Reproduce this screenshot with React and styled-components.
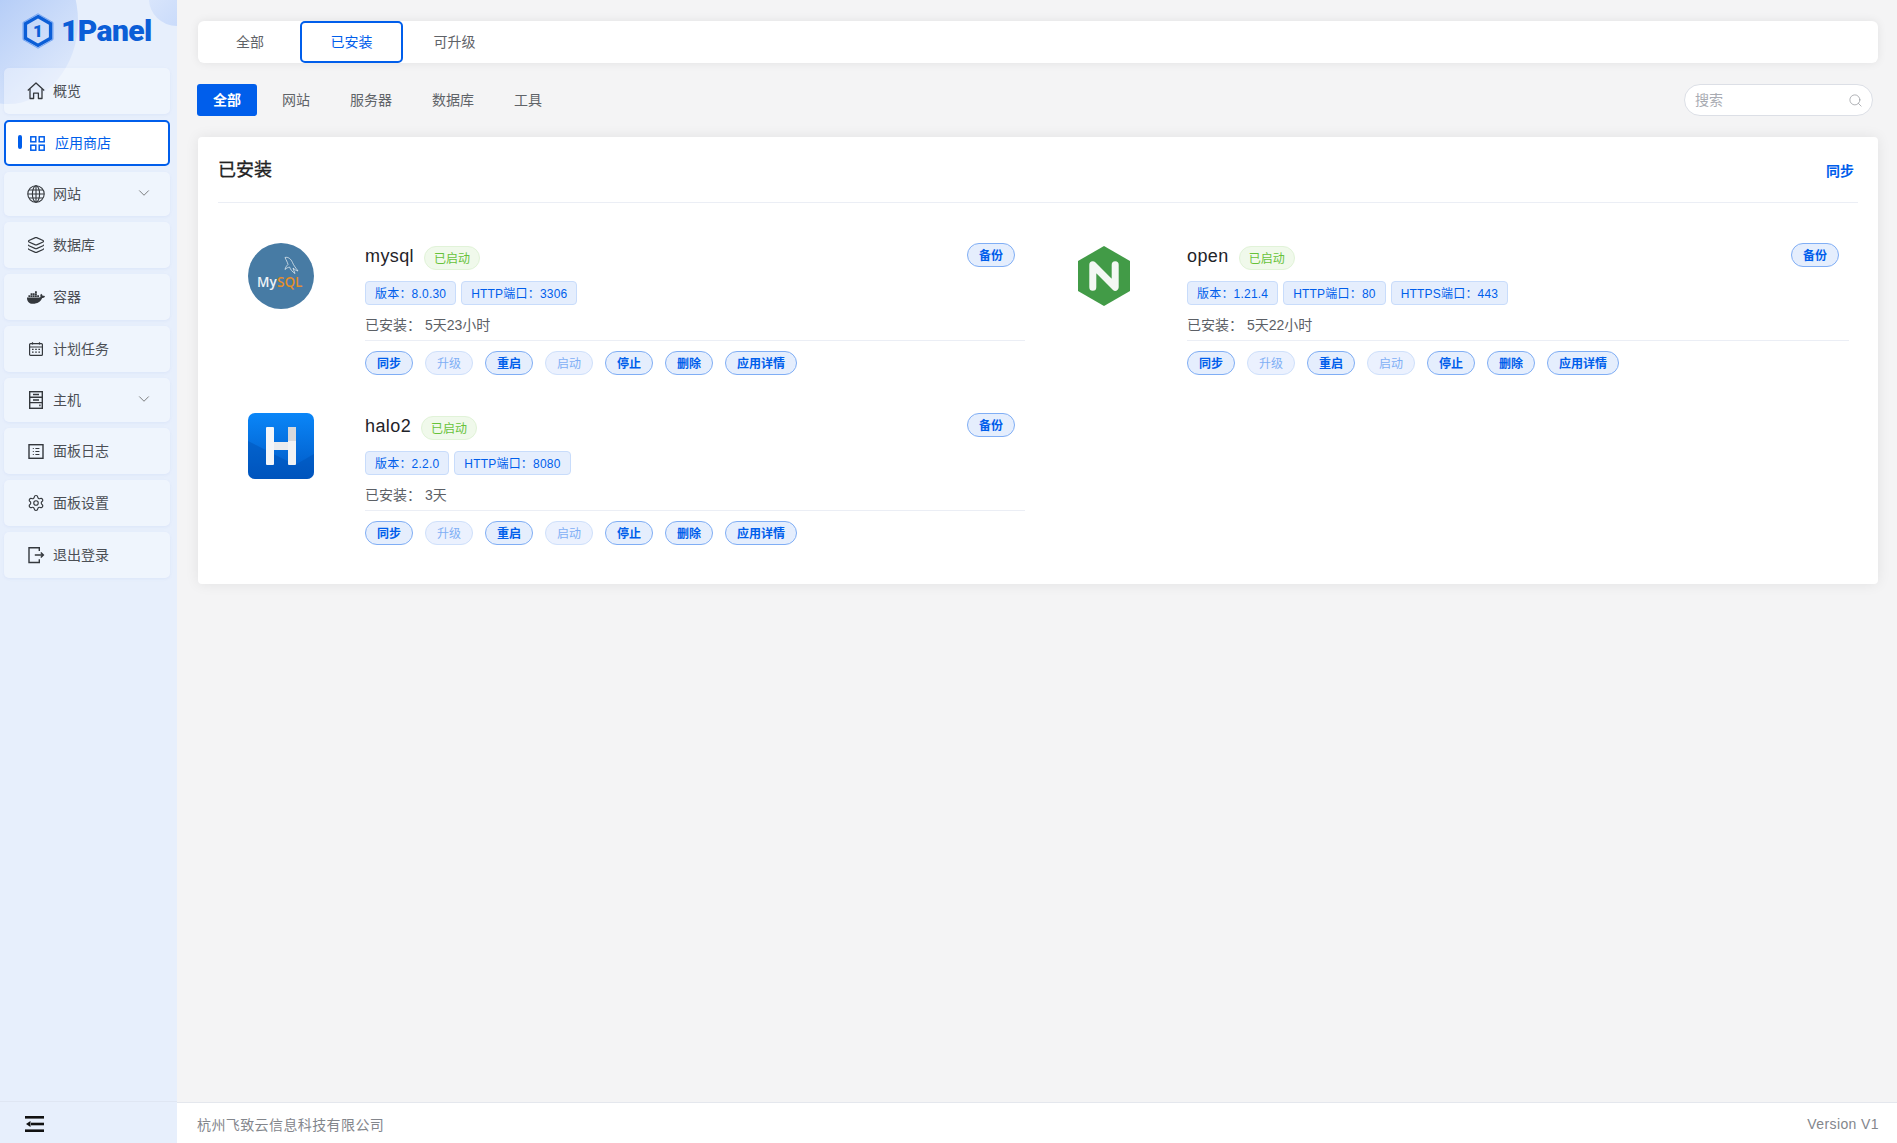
import styled, { createGlobalStyle } from 'styled-components';
import { useState } from 'react';
import { Layers, Settings, ChevronDown, Search } from 'lucide-react';
import { FaDocker } from 'react-icons/fa';

const FONT = `"Liberation Sans", "Noto Sans CJK SC", sans-serif`;
const BLUE = '#005eeb';
const INK = '#34383d';

const GlobalStyle = createGlobalStyle`
    html, body { margin: 0; padding: 0; height: 100%; }
    body { font-family: ${FONT}; background: #f4f4f5; overflow: hidden; }
    * { box-sizing: border-box; }
`;

const HomeIcon = () => (
    <svg width="18" height="18" viewBox="0 0 18 18" fill="none" stroke={INK} strokeWidth="1.300" strokeLinejoin="round">
        <path d="M.8 8.600 9 1l8.200 7.600" />
        <path d="M3 7v9.500h3.600v-5.300h4.800v5.300H15V7" />
    </svg>
);

const GridIcon = () => (
    <svg width="15" height="15" viewBox="0 0 15 15" fill="none" stroke={BLUE} strokeWidth="1.500">
        <rect x=".8" y=".8" width="5" height="5" />
        <rect x="9.200" y=".8" width="5" height="5" />
        <rect x=".8" y="9.200" width="5" height="5" />
        <rect x="9.200" y="9.200" width="5" height="5" />
    </svg>
);

const GlobeIcon = () => (
    <svg width="18" height="18" viewBox="0 0 18 18" fill="none" stroke={INK} strokeWidth="1.100">
        <circle cx="9" cy="9" r="8.200" />
        <ellipse cx="9" cy="9" rx="3.600" ry="8.200" />
        <path d="M9 .8v16.400M.8 9h16.400M2 5h14M2 13h14" />
    </svg>
);

const CalendarIcon = () => (
    <svg width="18" height="18" viewBox="0 0 18 18" fill="none" stroke={INK} strokeWidth="1.200">
        <rect x="2.600" y="3.600" width="12.800" height="11.800" rx="1" />
        <path d="M2.600 7h12.800M5.500 2.200v2.400M12.500 2.200v2.400" />
        <path d="M5 9.300h1.600M8.200 9.300h1.600M11.400 9.300H13M5 12.200h1.600M8.200 12.200h1.600M11.400 12.200H13" />
    </svg>
);

const ServerIcon = () => (
    <svg width="18" height="18" viewBox="0 0 18 18" fill="none" stroke={INK} strokeWidth="1.400">
        <rect x="2.700" y=".7" width="12.600" height="16.600" />
        <path d="M2.700 6.200h12.600M2.700 11.600h12.600M6 3.500h6M6 9h6" />
        <path d="M12.200 14.400h1.400" strokeWidth="1.800" />
    </svg>
);

const LogIcon = () => (
    <svg width="18" height="18" viewBox="0 0 18 18" fill="none" stroke={INK} strokeWidth="1.400">
        <rect x="2" y="2.700" width="14" height="13.600" />
        <path d="M5.800 6.500h1M8.400 6.500h4M5.800 9.500h1M8.400 9.500h4M5.800 12.500h1M8.400 12.500h4" strokeWidth="1.200" />
    </svg>
);

const LogoutIcon = () => (
    <svg width="18" height="18" viewBox="0 0 18 18" fill="none" stroke={INK} strokeWidth="1.400">
        <path d="M12.300 5V1.700H2v14.800h10.300v-3.300" />
        <path d="M7.800 9h8.600M13.800 6.400 16.400 9l-2.600 2.600" />
    </svg>
);

const BrandIcon = () => (
    <svg width="32" height="36" viewBox="0 0 32 36">
        <path d="M16 .8 31 9.400v17.200L16 35.200 1 26.600V9.400z" fill="none" stroke="#4d8df0" strokeWidth=".7" />
        <path d="M16 3.600 28.600 10.800v14.400L16 32.400 3.400 25.200V10.800z" fill="none" stroke="#0b5ed7" strokeWidth="3.400" />
        <text x="16" y="24" textAnchor="middle" fontFamily="Roboto, sans-serif" fontWeight="900" fontSize="17" fill="#0b5ed7">1</text>
    </svg>
);

const MysqlLogo = () => (
    <svg width="66" height="66" viewBox="0 0 66 66">
        <circle cx="33" cy="33" r="33" fill="#477ba4" />
        <text x="9" y="43.500" fontFamily="'Open Sans', sans-serif" fontWeight="600" fontSize="13.500" fill="#eef3f7">My</text>
        <text x="29" y="43.500" fontFamily="'Open Sans', sans-serif" fontWeight="600" fontSize="13.500" fill="#e48e2a">SQL</text>
        <path d="M37 14.500c3-1 6 1.500 7.500 5 1 2.500 2.500 4.500 5.500 8.500-2-.5-3.500-1.500-5-3 .5 2 1.500 4 2 5.500-2.500-1.500-4.500-4-5.500-6.500-1.500.5-3 1-4.500 2.500.5-2.500 2-4 3-5-.5-2.500-2-4.500-3-7z" fill="none" stroke="#dfe8ef" strokeWidth=".8" />
    </svg>
);

const NginxLogo = () => (
    <svg width="54" height="60" viewBox="-2 0 54 60">
        <path d="M26 0 52 15v30L26 60 0 45V15z" fill="#429b47" />
        <path d="M14.800 41.200V18.800L37.200 41.200V18.800" fill="none" stroke="#f3f8f3" strokeWidth="7" strokeLinecap="round" strokeLinejoin="round" />
    </svg>
);

const HaloLogo = () => (
    <svg width="66" height="66" viewBox="0 0 66 66">
        <defs>
            <linearGradient id="haloBg" x1="0" y1="0" x2="0" y2="1">
                <stop offset="0" stopColor="#0a86f8" />
                <stop offset="1" stopColor="#0058c4" />
            </linearGradient>
        </defs>
        <rect width="66" height="66" rx="7" fill="url(#haloBg)" />
        <path d="M47 52 66 41v18a7 7 0 0 1-7 7H7a7 7 0 0 1-7-7V28z" fill="#004fb4" opacity=".45" />
        <rect x="18" y="14" width="8" height="38" rx="1" fill="#f4f6f9" />
        <rect x="40" y="14" width="8" height="38" rx="1" fill="#f1f2f4" />
        <rect x="40" y="14" width="8" height="14" fill="#d8d9dc" />
        <rect x="26" y="29" width="14" height="8" fill="#e9ebee" />
    </svg>
);

const iconStroke = { size: 22, strokeWidth: 1.500, color: INK };

const menu = [
    { label: '概览', icon: <HomeIcon />, h: 46 },
    { label: '应用商店', icon: <GridIcon />, h: 46, active: true },
    { label: '网站', icon: <GlobeIcon />, h: 44, arrow: true },
    { label: '数据库', icon: <Layers {...iconStroke} />, h: 46 },
    { label: '容器', icon: <FaDocker size={21} color={INK} />, h: 46 },
    { label: '计划任务', icon: <CalendarIcon />, h: 46 },
    { label: '主机', icon: <ServerIcon />, h: 44, arrow: true },
    { label: '面板日志', icon: <LogIcon />, h: 46 },
    { label: '面板设置', icon: <Settings {...iconStroke} />, h: 46 },
    { label: '退出登录', icon: <LogoutIcon />, h: 46 },
];

const apps = [
    {
        name: 'mysql',
        logo: <MysqlLogo />,
        tags: ['版本：8.0.30', 'HTTP端口：3306'],
        installed: '5天23小时',
    },
    {
        name: 'open',
        logo: <NginxLogo />,
        tags: ['版本：1.21.4', 'HTTP端口：80', 'HTTPS端口：443'],
        installed: '5天22小时',
    },
    {
        name: 'halo2',
        logo: <HaloLogo />,
        tags: ['版本：2.2.0', 'HTTP端口：8080'],
        installed: '3天',
    },
];

const actions = [
    { label: '同步' },
    { label: '升级', disabled: true },
    { label: '重启' },
    { label: '启动', disabled: true },
    { label: '停止' },
    { label: '删除' },
    { label: '应用详情' },
];

export default function App() {
    const [tab, setTab] = useState('已安装');
    const [filter, setFilter] = useState('全部');

    return (
        <Layout>
            <GlobalStyle />
            <Sidebar>
                <BlobLeft />
                <BlobRight />
                <Brand>
                    <BrandIcon />
                    <BrandName>1Panel</BrandName>
                </Brand>
                <Menu>
                    {menu.map((item) => (
                        <MenuItem key={item.label} $active={item.active} $h={item.h}>
                            {item.active && <ActiveBar />}
                            <MenuIcon $active={item.active}>{item.icon}</MenuIcon>
                            <span>{item.label}</span>
                            {item.arrow && <MenuArrow><ChevronDown size={18} strokeWidth={1} color="#555" /></MenuArrow>}
                        </MenuItem>
                    ))}
                </Menu>
                <Collapse>
                    <svg width="20" height="16" viewBox="0 0 20 16" fill="#111">
                        <rect x="0" y="0" width="19" height="2.600" />
                        <rect x="0" y="13.400" width="19" height="2.600" />
                        <rect x="6" y="6.700" width="13" height="2.600" />
                        <path d="M1 8l4.500-3v6z" />
                    </svg>
                </Collapse>
            </Sidebar>

            <Main>
                <Content>
                    <TabBar>
                        {['全部', '已安装', '可升级'].map((t) => (
                            <Tab key={t} $active={t === tab} onClick={() => setTab(t)}>{t}</Tab>
                        ))}
                    </TabBar>

                    <FilterRow>
                        {['全部', '网站', '服务器', '数据库', '工具'].map((f) => (
                            <Filter key={f} $active={f === filter} onClick={() => setFilter(f)}>{f}</Filter>
                        ))}
                        <SearchBox>
                            <SearchInput placeholder="搜索" />
                            <Search size={15} strokeWidth={1.100} color="#8f9198" />
                        </SearchBox>
                    </FilterRow>

                    <Card>
                        <CardHeader>
                            <CardTitle>已安装</CardTitle>
                            <SyncLink>同步</SyncLink>
                        </CardHeader>
                        <AppGrid>
                            {apps.map((app) => (
                                <AppRow key={app.name}>
                                    <LogoCell>{app.logo}</LogoCell>
                                    <AppInfo>
                                        <TitleRow>
                                            <AppName>{app.name}</AppName>
                                            <Status>已启动</Status>
                                            <ActionButton $right>备份</ActionButton>
                                        </TitleRow>
                                        <TagRow>
                                            {app.tags.map((t) => <Tag key={t}>{t}</Tag>)}
                                        </TagRow>
                                        <Installed>
                                            <InstalledLabel>已安装：</InstalledLabel>
                                            {app.installed}
                                        </Installed>
                                        <Actions>
                                            {actions.map((a) => (
                                                <ActionButton key={a.label} $disabled={a.disabled}>{a.label}</ActionButton>
                                            ))}
                                        </Actions>
                                    </AppInfo>
                                </AppRow>
                            ))}
                        </AppGrid>
                    </Card>
                </Content>
                <Footer>
                    <span>杭州飞致云信息科技有限公司</span>
                    <span>Version V1</span>
                </Footer>
            </Main>
        </Layout>
    );
}

const Layout = styled.div`
    display: flex;
    height: 100vh;
`;

const Sidebar = styled.aside`
    position: relative;
    width: 177px;
    flex-shrink: 0;
    display: flex;
    flex-direction: column;
    background: #e7effc;
    overflow: hidden;
`;

const BlobLeft = styled.div`
    position: absolute;
    left: -62px;
    top: -62px;
    width: 140px;
    height: 166px;
    border-radius: 50%;
    background: linear-gradient(135deg, #a9c5f6 25%, #e3ecfc 95%);
`;

const BlobRight = styled.div`
    position: absolute;
    right: -28px;
    top: -28px;
    width: 56px;
    height: 54px;
    border-radius: 50%;
    background: linear-gradient(135deg, #e0eafc, #c2d6fa);
`;

const Brand = styled.div`
    position: relative;
    height: 68px;
    display: flex;
    align-items: flex-start;
    gap: 7px;
    padding: 13px 0 0 22px;
`;

const BrandName = styled.div`
    font-family: Roboto, sans-serif;
    font-weight: 900;
    font-size: 30px;
    line-height: 35px;
    letter-spacing: -0.6px;
    color: #0b5ed7;
`;

const Menu = styled.nav`
    position: relative;
    display: flex;
    flex-direction: column;
    gap: 6px;
    padding: 0 7px 0 4px;
    flex: 1;
`;

const MenuItem = styled.div`
    display: flex;
    align-items: center;
    height: ${(p) => p.$h}px;
    padding-left: ${(p) => (p.$active ? '12px' : '23px')};
    padding-bottom: 2px;
    border-radius: 5px;
    font-size: 14px;
    cursor: pointer;
    color: ${(p) => (p.$active ? BLUE : '#4b4f55')};
    background: ${(p) => (p.$active ? '#fff' : 'rgba(255, 255, 255, 0.36)')};
    border: ${(p) => (p.$active ? `2px solid ${BLUE}` : 'none')};
    box-shadow: ${(p) => (p.$active ? 'none' : '0 1px 3px rgba(120, 150, 220, 0.1)')};
`;

const ActiveBar = styled.i`
    width: 4px;
    height: 14px;
    border-radius: 2px;
    background: ${BLUE};
    margin-right: 8px;
`;

const MenuIcon = styled.span`
    display: flex;
    align-items: center;
    justify-content: center;
    width: ${(p) => (p.$active ? '15px' : '18px')};
    margin-top: 2px;
    margin-right: ${(p) => (p.$active ? '10px' : '8px')};
`;

const MenuArrow = styled.span`
    display: flex;
    margin-left: auto;
    margin-right: 17px;
    margin-top: -1px;
`;

const Collapse = styled.div`
    height: 42px;
    flex-shrink: 0;
    display: flex;
    align-items: center;
    padding: 2px 0 0 25px;
    border-top: 1px solid #dfe6f3;
`;

const Main = styled.main`
    flex: 1;
    min-width: 0;
    display: flex;
    flex-direction: column;
`;

const Content = styled.div`
    flex: 1;
    padding: 21px 19px 0 21px;
`;

const TabBar = styled.div`
    display: flex;
    height: 42px;
    background: #fff;
    border-radius: 6px;
    box-shadow: 0 0 10px rgba(0, 0, 0, 0.08);
`;

const Tab = styled.div`
    width: 103px;
    padding-bottom: 2px;
    display: flex;
    align-items: center;
    justify-content: center;
    font-size: 14px;
    cursor: pointer;
    color: ${(p) => (p.$active ? BLUE : '#5f6368')};
    border: ${(p) => (p.$active ? `2px solid ${BLUE}` : 'none')};
    border-radius: 5px;

    &:first-child {
        width: 102px;
        padding-left: 2px;
    }
`;

const FilterRow = styled.div`
    display: flex;
    align-items: center;
    gap: 10px;
    margin: 21px 5px 21px -1px;
    height: 32px;
`;

const Filter = styled.div`
    height: 32px;
    padding: 0 ${(p) => (p.$active ? '16px' : '15px')} 2px;
    display: flex;
    align-items: center;
    font-size: 14px;
    border-radius: 3px;
    cursor: pointer;
    font-weight: ${(p) => (p.$active ? 700 : 400)};
    color: ${(p) => (p.$active ? '#fff' : '#5f6368')};
    background: ${(p) => (p.$active ? BLUE : 'transparent')};
`;

const SearchBox = styled.label`
    margin-left: auto;
    width: 189px;
    height: 32px;
    display: flex;
    align-items: center;
    padding: 0 9px 0 10px;
    background: #fff;
    border: 1px solid #dcdfe6;
    border-radius: 16px;
`;

const SearchInput = styled.input`
    flex: 1;
    min-width: 0;
    border: none;
    outline: none;
    padding: 0;
    background: transparent;
    font-family: ${FONT};
    font-size: 14px;

    &::placeholder {
        color: #a8abb2;
    }
`;

const Card = styled.section`
    background: #fff;
    border-radius: 4px;
    padding: 0 20px 19px;
    box-shadow: 0 0 14px rgba(0, 0, 0, 0.08);
`;

const CardHeader = styled.header`
    height: 66px;
    display: flex;
    align-items: center;
    justify-content: space-between;
    padding-right: 4px;
    border-bottom: 1px solid #ebeef5;
`;

const CardTitle = styled.h2`
    margin: 0 0 3px;
    font-size: 18px;
    font-weight: 400;
    color: #222;
    -webkit-text-stroke: 0.3px #222;
`;

const SyncLink = styled.a`
    font-size: 14px;
    font-weight: 700;
    color: ${BLUE};
    cursor: pointer;
`;

const AppGrid = styled.div`
    display: grid;
    grid-template-columns: 822px 824px;
    margin: 22px 0 0 -2px;
`;

const AppRow = styled.article`
    display: flex;
    height: 170px;
    padding: 18px 13px 0 32px;
`;

const LogoCell = styled.div`
    width: 66px;
    height: 66px;
    margin-right: 51px;
    flex-shrink: 0;
    display: flex;
    align-items: center;
    justify-content: center;
`;

const AppInfo = styled.div`
    flex: 1;
    min-width: 0;
`;

const TitleRow = styled.div`
    display: flex;
    align-items: center;
    height: 27px;
`;

const AppName = styled.span`
    font-size: 18px;
    letter-spacing: 0.4px;
    color: #1f2329;
    margin-right: 10px;
`;

const Status = styled.span`
    height: 24px;
    padding: 0 9px 2px;
    margin-top: 3px;
    display: flex;
    align-items: center;
    font-size: 12px;
    color: #67c23a;
    background: #f0f9eb;
    border: 1px solid #e1f3d8;
    border-radius: 12px;
`;

const TagRow = styled.div`
    display: flex;
    gap: 5px;
    margin-top: 11px;
`;

const Tag = styled.span`
    height: 24px;
    padding: 0 9px 2px;
    display: flex;
    align-items: center;
    font-size: 12px;
    letter-spacing: 0.2px;
    color: ${BLUE};
    background: #e5eefd;
    border: 1px solid #c8dcfb;
    border-radius: 4px;
`;

const Installed = styled.div`
    height: 36px;
    display: flex;
    align-items: center;
    padding-top: 3px;
    font-size: 14px;
    color: #5c6066;
    border-bottom: 1px solid #ebeef5;
`;

const InstalledLabel = styled.span`
    width: 60px;
`;

const Actions = styled.div`
    display: flex;
    gap: 12px;
    margin-top: 10px;
`;

const ActionButton = styled.button`
    height: 24px;
    padding: 0 11px 2px;
    font-family: ${FONT};
    font-size: 12px;
    font-weight: ${(p) => (p.$disabled ? 400 : 700)};
    color: ${(p) => (p.$disabled ? '#7fafF5' : BLUE)};
    background: ${(p) => (p.$disabled ? '#ebf1fe' : '#e5eefd')};
    border: 1px solid ${(p) => (p.$disabled ? '#cfe0fb' : '#80aef5')};
    border-radius: 12px;
    cursor: ${(p) => (p.$disabled ? 'not-allowed' : 'pointer')};
    ${(p) => p.$right && 'margin: 0 10px 0 auto; align-self: flex-start;'}
`;

const Footer = styled.footer`
    height: 41px;
    flex-shrink: 0;
    display: flex;
    align-items: center;
    justify-content: space-between;
    padding: 2px 18px 0 20px;
    background: #fff;
    border-top: 1px solid #e4e7ed;
    font-size: 14px;
    letter-spacing: 0.4px;
    color: #83868c;
`;
